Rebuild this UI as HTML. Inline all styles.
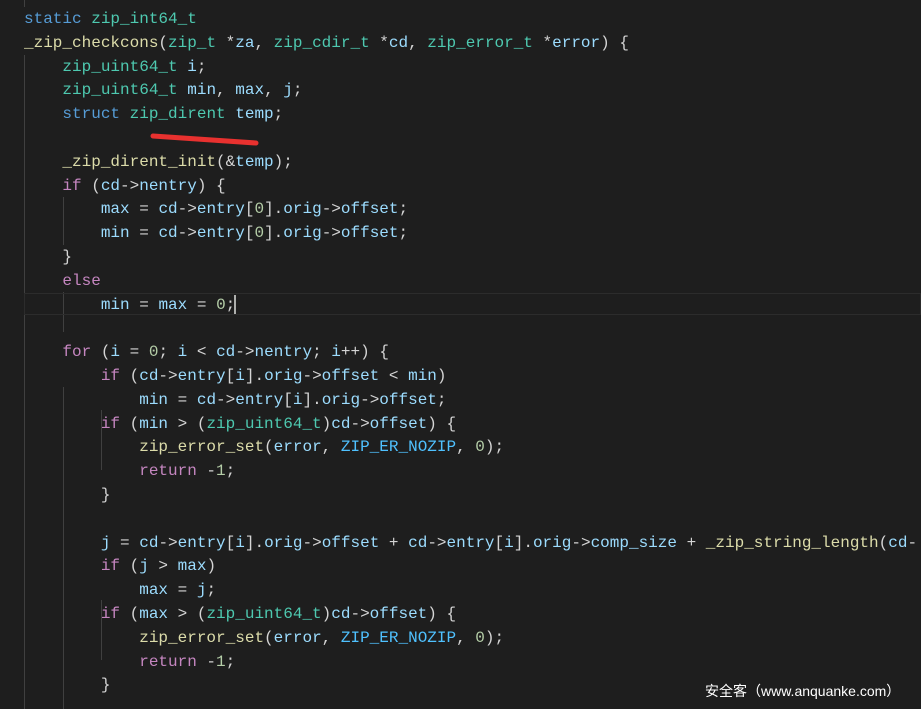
<!DOCTYPE html>
<html><head><meta charset="utf-8"><style>
body{margin:0;background:#1e1e1e;width:921px;height:709px;overflow:hidden;position:relative}
pre{margin:0;position:absolute;left:24px;top:8px;width:897px;overflow:hidden;font-family:"Liberation Mono",monospace;font-size:16px;line-height:23.8px;color:#d4d4d4;white-space:pre}
.k{color:#569cd6}.t{color:#4ec9b0}.v{color:#9cdcfe}.f{color:#dcdcaa}.n{color:#b5cea8}.c{color:#4fc1ff}.p{color:#c586c0}
.g{position:absolute;width:1px;background:#404040}
.wm{position:absolute;left:705px;top:681px;color:#fff;font:14px "Liberation Sans","Noto Sans CJK SC",sans-serif;white-space:nowrap}
</style></head><body>
<div class="g" style="left:24px;top:0;height:7px"></div>
<div class="g" style="left:24px;top:55px;height:654px"></div>
<div class="g" style="left:63px;top:197px;height:48px"></div>
<div class="g" style="left:63px;top:292px;height:40px"></div>
<div class="g" style="left:63px;top:387px;height:322px"></div>
<div class="g" style="left:101px;top:410px;height:60px"></div>
<div class="g" style="left:101px;top:600px;height:60px"></div>
<div style="position:absolute;left:24px;top:293px;width:897px;height:22px;border:1px solid #2c2c2c;box-sizing:border-box"></div>
<div style="position:absolute;left:234px;top:295px;width:2px;height:19px;background:#aeafad"></div>
<svg style="position:absolute;left:0;top:0" width="921" height="709"><path d="M153 136 Q200 139 256 143" stroke="#e8312f" stroke-width="5" stroke-linecap="round" fill="none"/></svg>
<pre><span class="k">static</span> <span class="t">zip_int64_t</span>
<span class="f">_zip_checkcons</span>(<span class="t">zip_t</span> *<span class="v">za</span>, <span class="t">zip_cdir_t</span> *<span class="v">cd</span>, <span class="t">zip_error_t</span> *<span class="v">error</span>) {
    <span class="t">zip_uint64_t</span> <span class="v">i</span>;
    <span class="t">zip_uint64_t</span> <span class="v">min</span>, <span class="v">max</span>, <span class="v">j</span>;
    <span class="k">struct</span> <span class="t">zip_dirent</span> <span class="v">temp</span>;

    <span class="f">_zip_dirent_init</span>(&amp;<span class="v">temp</span>);
    <span class="p">if</span> (<span class="v">cd</span>-&gt;<span class="v">nentry</span>) {
        <span class="v">max</span> = <span class="v">cd</span>-&gt;<span class="v">entry</span>[<span class="n">0</span>].<span class="v">orig</span>-&gt;<span class="v">offset</span>;
        <span class="v">min</span> = <span class="v">cd</span>-&gt;<span class="v">entry</span>[<span class="n">0</span>].<span class="v">orig</span>-&gt;<span class="v">offset</span>;
    }
    <span class="p">else</span>
        <span class="v">min</span> = <span class="v">max</span> = <span class="n">0</span>;

    <span class="p">for</span> (<span class="v">i</span> = <span class="n">0</span>; <span class="v">i</span> &lt; <span class="v">cd</span>-&gt;<span class="v">nentry</span>; <span class="v">i</span>++) {
        <span class="p">if</span> (<span class="v">cd</span>-&gt;<span class="v">entry</span>[<span class="v">i</span>].<span class="v">orig</span>-&gt;<span class="v">offset</span> &lt; <span class="v">min</span>)
            <span class="v">min</span> = <span class="v">cd</span>-&gt;<span class="v">entry</span>[<span class="v">i</span>].<span class="v">orig</span>-&gt;<span class="v">offset</span>;
        <span class="p">if</span> (<span class="v">min</span> &gt; (<span class="t">zip_uint64_t</span>)<span class="v">cd</span>-&gt;<span class="v">offset</span>) {
            <span class="f">zip_error_set</span>(<span class="v">error</span>, <span class="c">ZIP_ER_NOZIP</span>, <span class="n">0</span>);
            <span class="p">return</span> -<span class="n">1</span>;
        }

        <span class="v">j</span> = <span class="v">cd</span>-&gt;<span class="v">entry</span>[<span class="v">i</span>].<span class="v">orig</span>-&gt;<span class="v">offset</span> + <span class="v">cd</span>-&gt;<span class="v">entry</span>[<span class="v">i</span>].<span class="v">orig</span>-&gt;<span class="v">comp_size</span> + <span class="f">_zip_string_length</span>(<span class="v">cd</span>-
        <span class="p">if</span> (<span class="v">j</span> &gt; <span class="v">max</span>)
            <span class="v">max</span> = <span class="v">j</span>;
        <span class="p">if</span> (<span class="v">max</span> &gt; (<span class="t">zip_uint64_t</span>)<span class="v">cd</span>-&gt;<span class="v">offset</span>) {
            <span class="f">zip_error_set</span>(<span class="v">error</span>, <span class="c">ZIP_ER_NOZIP</span>, <span class="n">0</span>);
            <span class="p">return</span> -<span class="n">1</span>;
        }
</pre>
<div class="wm">安全客（www.anquanke.com）</div>
</body></html>
